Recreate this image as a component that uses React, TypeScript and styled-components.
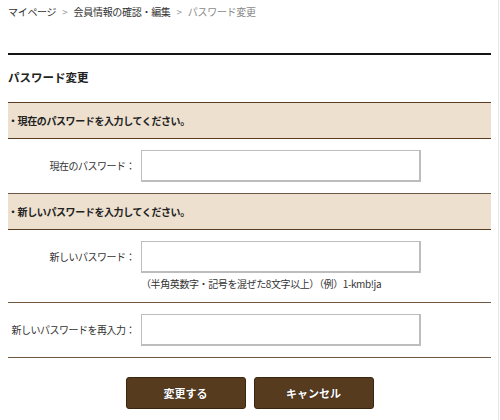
import styled, { createGlobalStyle } from "styled-components";

const GlobalStyle = createGlobalStyle`
  body {
    margin: 0;
    background: #fff;
    font-family: "Noto Sans CJK JP", "Noto Sans", sans-serif;
    color: #333;
  }
`;

const Page = styled.div`
  width: 499px;
  min-height: 420px;
  box-sizing: border-box;
  padding: 0 7px 0 8px;
  border-right: 1px solid #e6e6e6;
`;

const Breadcrumb = styled.div`
  padding-top: 5px;
  font-size: 10px;
  letter-spacing: -0.3px;
  line-height: 14px;
  color: #333;
`;

const Crumb = styled.span<{ $current?: boolean }>`
  color: ${(p) => (p.$current ? "#8a8a8a" : "#333")};
`;

const Sep = styled.span`
  color: #999;
  margin: 0 6px;
`;

const Rule = styled.div`
  margin-top: 34px;
  height: 2px;
  background: #141414;
`;

const Title = styled.h2`
  margin: 13px 0 0;
  font-size: 11.5px;
  line-height: 18px;
  font-weight: bold;
  color: #222;
`;

const Table = styled.div`
  margin-top: 16px;
  border-top: 1px solid #5a3d20;
`;

const SectionHead = styled.div`
  height: 35px;
  display: flex;
  align-items: center;
  background: #ede0cf;
  border-bottom: 1px solid #5a3d20;
  font-size: 10px;
  letter-spacing: -0.4px;
  font-weight: bold;
  color: #222;
`;

const Row = styled.div`
  display: grid;
  grid-template-columns: 127px 280px;
  column-gap: 6px;
  align-items: start;
  padding: 11px 0;
  border-bottom: 1px solid #6e573f;
`;

const Label = styled.label`
  text-align: right;
  font-size: 10px;
  line-height: 32px;
  letter-spacing: -0.5px;
  color: #333;
  white-space: nowrap;
`;

const Field = styled.div`
  display: flex;
  flex-direction: column;
  gap: 4px;
`;

const Input = styled.input`
  height: 32px;
  width: 280px;
  box-sizing: border-box;
  border: 1px solid #bdbdbd;
  border-right-width: 2px;
  border-bottom-width: 2px;
  background: #fff;
  outline: none;
`;

const Hint = styled.div`
  font-size: 10px;
  letter-spacing: -0.4px;
  line-height: 14px;
  color: #333;
  white-space: nowrap;
`;

const Buttons = styled.div`
  margin-top: 19px;
  display: flex;
  justify-content: center;
  gap: 8px;
`;

const Button = styled.button`
  width: 120px;
  height: 32px;
  background: #563b1f;
  border: 1px solid #3a2510;
  border-radius: 3px;
  color: #fff;
  font-family: inherit;
  font-size: 11px;
  font-weight: bold;
  text-shadow: 0 0 1px rgba(0, 0, 0, 0.6);
  cursor: pointer;
`;

const App = () => {
  return (
    <Page>
      <GlobalStyle />
      <Breadcrumb>
        <Crumb>マイページ</Crumb>
        <Sep>&gt;</Sep>
        <Crumb>会員情報の確認・編集</Crumb>
        <Sep>&gt;</Sep>
        <Crumb $current>パスワード変更</Crumb>
      </Breadcrumb>
      <Rule />
      <Title>パスワード変更</Title>

      <Table>
        <SectionHead>・現在のパスワードを入力してください。</SectionHead>
        <Row>
          <Label>現在のパスワード：</Label>
          <Input type="password" />
        </Row>
        <SectionHead>・新しいパスワードを入力してください。</SectionHead>
        <Row>
          <Label>新しいパスワード：</Label>
          <Field>
            <Input type="password" />
            <Hint>（半角英数字・記号を混ぜた8文字以上）（例）1-kmb!ja</Hint>
          </Field>
        </Row>
        <Row>
          <Label>新しいパスワードを再入力：</Label>
          <Input type="password" />
        </Row>
      </Table>

      <Buttons>
        <Button>変更する</Button>
        <Button>キャンセル</Button>
      </Buttons>
    </Page>
  );
};

export default App;
